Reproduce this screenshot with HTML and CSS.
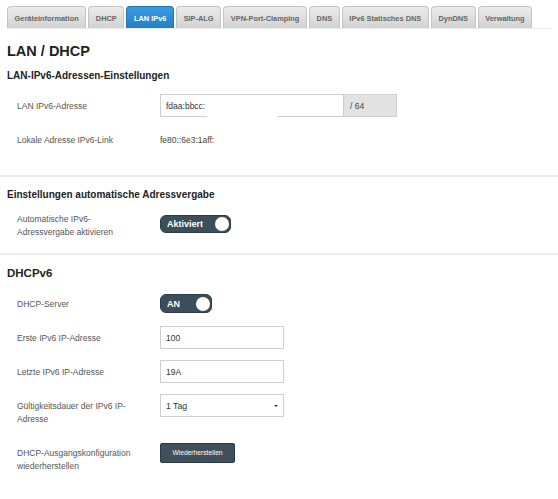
FILE: index.html
```html
<!DOCTYPE html>
<html lang="de">
<head>
    <meta charset="UTF-8">
    <meta name="viewport" content="width=device-width, initial-scale=1.0">
    <title>LAN / DHCP</title>
    <link rel="stylesheet" href="styles.css">
</head>
<body>
    <div class="page">
        <ul class="tabs">
            <li><a href="#">Geräteinformation</a></li>
            <li><a href="#">DHCP</a></li>
            <li class="active"><a href="#">LAN IPv6</a></li>
            <li><a href="#">SIP-ALG</a></li>
            <li><a href="#">VPN-Port-Clamping</a></li>
            <li><a href="#">DNS</a></li>
            <li><a href="#">IPv6 Statisches DNS</a></li>
            <li><a href="#">DynDNS</a></li>
            <li><a href="#">Verwaltung</a></li>
        </ul>

        <h1 class="title">LAN / DHCP</h1>

        <h3 class="section-title">LAN-IPv6-Adressen-Einstellungen</h3>

        <div class="row">
            <label class="row-label">LAN IPv6-Adresse</label>
            <div class="input-group">
                <input class="field field-wide" type="text" value="fdaa:bbcc:">
                <span class="addon">/ 64</span>
                <span class="mask"></span>
            </div>
        </div>

        <div class="row">
            <label class="row-label">Lokale Adresse IPv6-Link</label>
            <div class="static-value">fe80::6e3:1aff:</div>
        </div>

        <hr class="divider">

        <h3 class="section-title">Einstellungen automatische Adressvergabe</h3>

        <div class="row row-tight">
            <label class="row-label">Automatische IPv6-<br>Adressvergabe aktivieren</label>
            <div>
                <span class="switch switch-wide">Aktiviert<span class="knob"></span></span>
            </div>
        </div>

        <hr class="divider divider-low">

        <h2 class="section-title section-title-big">DHCPv6</h2>

        <div class="row row-switch">
            <label class="row-label">DHCP-Server</label>
            <div>
                <span class="switch">AN<span class="knob"></span></span>
            </div>
        </div>

        <div class="row">
            <label class="row-label">Erste IPv6 IP-Adresse</label>
            <input class="field" type="text" value="100">
        </div>

        <div class="row">
            <label class="row-label">Letzte IPv6 IP-Adresse</label>
            <input class="field" type="text" value="19A">
        </div>

        <div class="row">
            <label class="row-label">Gültigkeitsdauer der IPv6 IP-<br>Adresse</label>
            <div class="select-wrap">
                <select class="field select">
                    <option>1 Tag</option>
                    <option>2 Tage</option>
                    <option>1 Woche</option>
                </select>
            </div>
        </div>

        <div class="row">
            <label class="row-label">DHCP-Ausgangskonfiguration<br>wiederherstellen</label>
            <div>
                <button class="btn">Wiederherstellen</button>
            </div>
        </div>
    </div>
</body>
</html>
```

FILE: styles.css
```css
body {
    margin: 0;
    background: #fff;
    font-family: "Liberation Sans", Arial, sans-serif;
    color: #333;
}

.page {
    padding: 6px 7px 0;
}

/* Tabs */
.tabs {
    display: flex;
    gap: 2px;
    list-style: none;
    margin: 0;
    padding: 0;
    border-bottom: 1px solid #ececec;
}

.tabs a {
    display: block;
    height: 22px;
    line-height: 23px;
    padding: 0 6.6px;
    font-size: 7.4px;
    font-weight: bold;
    color: #666;
    text-decoration: none;
    background: linear-gradient(#ececec, #d2d2d2);
    border: 1px solid #c4c4c4;
    border-bottom: 0;
    border-radius: 4px 4px 0 0;
    box-sizing: border-box;
}

.tabs .active a {
    color: #fff;
    background: linear-gradient(#3c9be0, #2380c8);
    border-color: #1f74b6;
}

/* Headings */
.title {
    margin: 13px 0 -1px;
    font-size: 14.5px;
    line-height: 18px;
    color: #222;
}

.section-title {
    margin: 10px 0 11px;
    font-size: 10px;
    line-height: 14px;
    color: #222;
}

.divider + .section-title {
    margin-top: 11px;
}

.section-title-big {
    font-size: 11.5px;
    line-height: 15px;
    margin-bottom: 12px;
}

.divider {
    border: 0;
    border-top: 2px solid #ececec;
    margin: 23px -7px 0;
}

.divider-low {
    margin-top: 14px;
}

/* Form rows */
.row {
    display: grid;
    grid-template-columns: 143px 1fr;
    align-items: start;
    padding-left: 10px;
    margin-bottom: 11px;
}

.row-label {
    padding: 6px 0 4px;
    font-size: 8.5px;
    line-height: 13px;
    color: #555;
}

.row-tight {
    margin-bottom: 0;
}

.row-tight .row-label {
    padding: 0;
}

.row-switch .row-label {
    padding: 5px 0 4px;
}

.static-value {
    padding: 6px 0 5px;
    font-size: 8.5px;
    line-height: 13px;
    color: #444;
}

.field {
    width: 124px;
    height: 23px;
    padding: 0 5px;
    border: 1px solid #cfcfcf;
    border-radius: 0;
    box-sizing: border-box;
    font-family: inherit;
    font-size: 8.5px;
    color: #333;
    background: #fff;
    outline: none;
}

.input-group {
    position: relative;
    display: flex;
    width: 237px;
}

.field-wide {
    width: 184px;
}

.addon {
    width: 53px;
    height: 23px;
    line-height: 22px;
    padding-left: 6px;
    box-sizing: border-box;
    background: #e2e2e2;
    border: 1px solid #cfcfcf;
    border-left: 0;
    font-size: 8.5px;
    color: #444;
}

/* redacted part of the address */
.mask {
    position: absolute;
    left: 47px;
    top: 4px;
    width: 71px;
    height: 21px;
    background: #fff;
}

.select-wrap {
    position: relative;
    width: 124px;
}

.select {
    appearance: none;
    -webkit-appearance: none;
    display: block;
    font-size: 8.7px;
}

.select-wrap::after {
    content: "";
    position: absolute;
    right: 6px;
    top: 11px;
    border-left: 2px solid transparent;
    border-right: 2px solid transparent;
    border-top: 2px solid #333;
}

/* Switch */
.switch {
    position: relative;
    display: inline-block;
    width: 52px;
    height: 19px;
    line-height: 19px;
    padding-left: 6px;
    box-sizing: border-box;
    background: #3d4e5b;
    border: 1px solid #2e3c46;
    border-radius: 6px;
    color: #fff;
    font-size: 9px;
    font-weight: bold;
}

.switch-wide {
    width: 71px;
    height: 18px;
    line-height: 17px;
}

.knob {
    position: absolute;
    right: 1px;
    top: 1.5px;
    width: 14px;
    height: 14px;
    border-radius: 50%;
    background: #fff;
}

.switch-wide .knob {
    top: 1px;
}

/* Button */
.btn {
    width: 75px;
    height: 20px;
    padding: 0;
    background: #3f505c;
    border: 1px solid #2b3943;
    border-radius: 2px;
    color: #fff;
    font-family: inherit;
    font-size: 6.7px;
    cursor: pointer;
}
```
